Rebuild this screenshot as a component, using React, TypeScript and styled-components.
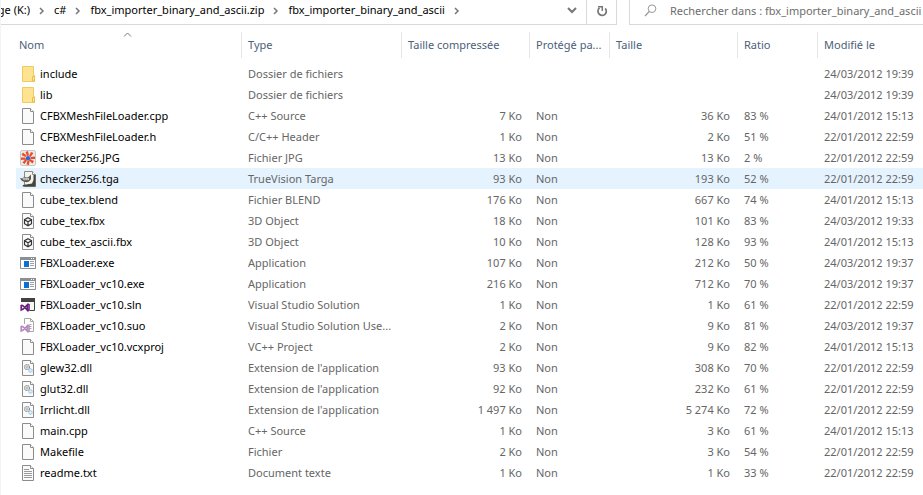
import React from 'react';
import styled, { createGlobalStyle, css } from 'styled-components';

const GlobalStyle = createGlobalStyle`
  * { box-sizing: border-box; }
  body {
    margin: 0;
    background: #fff;
    overflow: hidden;
    font-family: "Noto Sans", "Open Sans", sans-serif;
    font-size: 11px;
  }
`;

const Window = styled.main`
  min-height: 100vh;
  border-left: 1px solid #f4f4f4;
`;

const TopBar = styled.div`
  display: grid;
  grid-template-columns: minmax(0, 616px) minmax(0, 1fr);
  column-gap: 12px;
  height: 25px;
`;

const AddressBar = styled.nav`
  display: flex;
  border: 1px solid #d9d9d9;
  border-width: 0 1px 1px 0;
`;

const Crumbs = styled.ol`
  display: flex;
  flex: 1;
  align-items: center;
  min-width: 0;
  margin: 0;
  padding: 0 0 4px;
  list-style: none;
`;

const Crumb = styled.li`
  display: flex;
  align-items: center;
  justify-content: flex-end;
  white-space: nowrap;
  &:first-child { width: 53px; overflow: hidden; }
`;

const CrumbLink = styled.a`
  color: #000;
  line-height: 20px;
  text-decoration: none;
`;

const CrumbArrow = styled.svg`
  flex: none;
  width: 6px;
  height: 8px;
  margin: 1px 9px 0;
`;

const BarButton = styled.button<{ $divided?: boolean }>`
  display: flex;
  align-items: center;
  justify-content: center;
  width: 30px;
  padding: 0 0 3px;
  border: 0;
  border-left: 1px solid ${p => (p.$divided ? '#d9d9d9' : 'transparent')};
  background: none;
`;

const SearchBox = styled.label`
  display: flex;
  align-items: center;
  gap: 13px;
  padding: 0 0 4px 14px;
  border: 1px solid #d9d9d9;
  border-width: 0 0 1px 1px;
  overflow: hidden;
`;

const SearchInput = styled.input`
  flex: 1;
  min-width: 0;
  height: 20px;
  padding: 0;
  border: 0;
  outline: 0;
  background: none;
  color: #6d6d6d;
  font: inherit;
  &::placeholder { color: #6d6d6d; opacity: 1; }
`;

const FileTable = styled.table`
  width: calc(100% - 15px);
  margin: 7px 0 0 15px;
  border-spacing: 0;
  table-layout: fixed;
`;

const Column = styled.col<{ $width?: number }>`
  width: ${p => (p.$width ? `${p.$width}px` : 'auto')};
`;

const HeadCell = styled.th<{ $first?: boolean }>`
  height: 26px;
  padding: 0 4px 2px ${p => (p.$first ? 3 : 6)}px;
  border-right: 1px solid #e5e5e5;
  &:last-child { border-right: 0; }
  color: #4c607a;
  font-weight: 400;
  text-align: left;
  white-space: nowrap;
  overflow: hidden;
  text-overflow: ellipsis;
`;

const NameHead = styled.div`
  position: relative;
`;

const SortMark = styled.svg`
  position: absolute;
  top: -5px;
  left: calc(50% - 5px);
  width: 9px;
  height: 5px;
`;

const Row = styled.tr<{ $hover?: boolean }>`
  ${p => p.$hover && css`background: #e5f3ff;`}
`;

const Cell = styled.td<{ $right?: boolean }>`
  height: 21px;
  padding: 0 ${p => (p.$right ? 8 : 4)}px 0 6px;
  color: #666;
  line-height: 20px;
  text-align: ${p => (p.$right ? 'right' : 'left')};
  white-space: nowrap;
  overflow: hidden;
  text-overflow: ellipsis;
`;

const NameCell = styled(Cell)`
  padding: 0 0 0 4px;
  color: #000;
`;

const NameContent = styled.span`
  display: flex;
  align-items: center;
  gap: 4px;
`;

const TableBody = styled.tbody`
  &::before {
    content: "";
    display: table-row;
    height: 5px;
  }
`;

const Icon = styled.svg`
  flex: none;
  width: 16px;
  height: 16px;
`;

type Kind = 'folder' | 'page' | 'jpg' | 'tga' | 'cube' | 'exe' | 'sln' | 'suo' | 'dll' | 'txt';

const PageShape = () => (
  <>
    <path d="M2.5 .5h8l3 3v12h-11z" fill="#fafafa" stroke="#8c8c8c" />
    <path d="M10.5 .5v3h3" fill="#fff" stroke="#8c8c8c" />
  </>
);

const InfinityMark = ({ color }: { color: string }) => (
  <path d="M1.2 8v5l2-1 4-4v5l-4-4-2-1M7.500 7l1.500 .8v5.400L7.500 14" fill="none" stroke={color} strokeWidth="1.6" />
);

const drawings: Record<Kind, React.ReactNode> = {
  folder: (
    <>
      <path d="M2.5 .5h11v9h1v6h-12z" fill="#ffe391" stroke="#edcb62" />
      <path d="M12.5 15V10.5h2V15z" fill="#ffe9a8" stroke="#e8be45" />
    </>
  ),
  page: <PageShape />,
  jpg: (
    <>
      <rect x=".5" y=".5" width="15" height="15" rx="1.5" fill="#ececec" stroke="#c8c8c8" />
      <g fill="#ee4b22">
        <path d="M7 6L5.500 2 8 1l1 4.500zM9 6l2-4 2.500 1-3 4zM10.500 7l4.500-.5v2.500l-4.500 0zM10 9l4 2-1.500 2.500L9 10.500zM7.500 10.500L9.500 10.500 9 15l-2.500-.5zM5.500 9L7 10.500 4.500 14 2.500 12.500zM5.500 7.500v2L1 10V7.500zM6.500 5.500L5.500 7 1.500 5 3 2.500z" />
      </g>
      <circle cx="8" cy="8.200" r="2.200" fill="#2868d8" />
    </>
  ),
  tga: (
    <>
      <path d="M4.500 .5h8l3 3v12h-11z" fill="#f4f3ec" stroke="#8d8b80" />
      <path d="M12.500 .5v3h3" fill="#fff" stroke="#8d8b80" />
      <path d="M15.500 4v11.500H2.500L3 14l9-1.500L13.500 9V4z" fill="#45443d" />
      <path d="M0 7l3 .5L4 5.500l2 1 2.500-.5L11 3.500V8c-1 2.500-3 3.500-6 3C2.500 10.500 1 9.500 0 7z" fill="#5d5a52" />
      <circle cx="4.500" cy="8" r="1.200" fill="#fff" />
      <circle cx="7.500" cy="8" r="1.300" fill="#fff" />
      <circle cx="4.700" cy="8" r=".5" fill="#222" />
      <circle cx="7.500" cy="8" r=".5" fill="#222" />
    </>
  ),
  cube: (
    <>
      <PageShape />
      <path d="M8 4.700l3.500 2v4L8 12.700l-3.500-2v-4zM4.500 6.700L8 8.700l3.500-2M8 8.700v4" fill="none" stroke="#333" strokeWidth="1.200" />
    </>
  ),
  exe: (
    <>
      <path d="M.5 2.500h15v11H.5z" fill="#fff" stroke="#8a8f94" />
      <path d="M0 2h16v3H0z" fill="#8a8f94" />
      <path d="M11 3h1v1h-1zM13 3h1v1h-1z" fill="#fff" />
      <path d="M4 6h5v6H4z" fill="#0f6fd1" />
      <path d="M10 6.500h4M10 8.500h4M10 10.500h4" stroke="#a0a0a0" />
    </>
  ),
  sln: (
    <>
      <path d="M1.500 5V1.500h13v12H10" fill="#f6f6f6" stroke="#424242" />
      <path d="M1 1h14v4H1z" fill="#424242" />
      <InfinityMark color="#68217a" />
    </>
  ),
  suo: (
    <>
      <path d="M4.500 6V.5h6l3 3v10H9" fill="#fff" stroke="#a8a8a8" />
      <path d="M10.500 .5v3h3M9.500 6.500h2M9.500 8.500h2M9.500 10.500h2" fill="none" stroke="#a8a8a8" />
      <InfinityMark color="#b38bc0" />
    </>
  ),
  dll: (
    <>
      <PageShape />
      <circle cx="7" cy="7" r="2.500" fill="#e4e4e4" stroke="#8d9499" strokeWidth="1.200" strokeDasharray="1.400 .6" />
      <circle cx="7" cy="7" r=".8" fill="#8d9499" />
      <circle cx="10.500" cy="10.500" r="1.800" fill="#dceefa" stroke="#84b5d6" strokeDasharray="1.200 .5" />
    </>
  ),
  txt: (
    <>
      <PageShape />
      <path d="M4 4.500h5M4 6.500h8M4 8.500h8M4 10.500h8M4 12.500h8" stroke="#9a9a9a" />
    </>
  ),
};

type FileEntry = [Kind, string, string, string, string, string, string, string];

const d22 = '22/01/2012 22:59';
const d24 = '24/01/2012 15:13';
const m37 = '24/03/2012 19:37';
const m39 = '24/03/2012 19:39';

const files: FileEntry[] = [
  ['folder', 'include', 'Dossier de fichiers', '', '', '', '', m39],
  ['folder', 'lib', 'Dossier de fichiers', '', '', '', '', m39],
  ['page', 'CFBXMeshFileLoader.cpp', 'C++ Source', '7 Ko', 'Non', '36 Ko', '83 %', d24],
  ['page', 'CFBXMeshFileLoader.h', 'C/C++ Header', '1 Ko', 'Non', '2 Ko', '51 %', d22],
  ['jpg', 'checker256.JPG', 'Fichier JPG', '13 Ko', 'Non', '13 Ko', '2 %', d22],
  ['tga', 'checker256.tga', 'TrueVision Targa', '93 Ko', 'Non', '193 Ko', '52 %', d22],
  ['page', 'cube_tex.blend', 'Fichier BLEND', '176 Ko', 'Non', '667 Ko', '74 %', d24],
  ['cube', 'cube_tex.fbx', '3D Object', '18 Ko', 'Non', '101 Ko', '83 %', '24/03/2012 19:33'],
  ['cube', 'cube_tex_ascii.fbx', '3D Object', '10 Ko', 'Non', '128 Ko', '93 %', d24],
  ['exe', 'FBXLoader.exe', 'Application', '107 Ko', 'Non', '212 Ko', '50 %', m37],
  ['exe', 'FBXLoader_vc10.exe', 'Application', '216 Ko', 'Non', '712 Ko', '70 %', m37],
  ['sln', 'FBXLoader_vc10.sln', 'Visual Studio Solution', '1 Ko', 'Non', '1 Ko', '61 %', d22],
  ['suo', 'FBXLoader_vc10.suo', 'Visual Studio Solution Use...', '2 Ko', 'Non', '9 Ko', '81 %', m37],
  ['page', 'FBXLoader_vc10.vcxproj', 'VC++ Project', '2 Ko', 'Non', '9 Ko', '82 %', d24],
  ['dll', 'glew32.dll', "Extension de l'application", '93 Ko', 'Non', '308 Ko', '70 %', d22],
  ['dll', 'glut32.dll', "Extension de l'application", '92 Ko', 'Non', '232 Ko', '61 %', d22],
  ['dll', 'Irrlicht.dll', "Extension de l'application", '1 497 Ko', 'Non', '5 274 Ko', '72 %', d22],
  ['page', 'main.cpp', 'C++ Source', '1 Ko', 'Non', '3 Ko', '61 %', d24],
  ['page', 'Makefile', 'Fichier', '2 Ko', 'Non', '3 Ko', '54 %', d22],
  ['txt', 'readme.txt', 'Document texte', '1 Ko', 'Non', '1 Ko', '33 %', d22],
];

const crumbs = ['ge (K:)', 'c#', 'fbx_importer_binary_and_ascii.zip', 'fbx_importer_binary_and_ascii'];
const widths = [226, 160, 128, 80, 128, 80, undefined];
const headings = ['Type', 'Taille compressée', 'Protégé pa...', 'Taille', 'Ratio', 'Modifié le'];

export default function App() {
  return (
    <>
      <GlobalStyle />
      <Window>
        <TopBar>
          <AddressBar aria-label="Adresse">
            <Crumbs>
              {crumbs.map(text => (
                <Crumb key={text}>
                  <CrumbLink href="#">{text}</CrumbLink>
                  <CrumbArrow viewBox="0 0 6 8" aria-hidden="true">
                    <path d="M1 1l3 3-3 3" fill="none" stroke="#777" strokeWidth="1.500" />
                  </CrumbArrow>
                </Crumb>
              ))}
            </Crumbs>
            <BarButton aria-label="Emplacements précédents">
              <svg width="10" height="7" viewBox="0 0 10 7"><path d="M1 1l4 4 4-4" fill="none" stroke="#777" strokeWidth="2" /></svg>
            </BarButton>
            <BarButton $divided aria-label="Actualiser">
              <svg width="12" height="12" viewBox="0 0 12 12"><path d="M9.200 3.300A4.200 4.200 0 1 1 3.500 2.900" fill="none" stroke="#777" strokeWidth="1.700" /><path d="M2 1.700h4.300V6" fill="none" stroke="#777" strokeWidth="1.500" /></svg>
            </BarButton>
          </AddressBar>
          <SearchBox>
            <svg width="13" height="13" viewBox="0 0 13 13"><circle cx="8" cy="4.700" r="3.800" fill="none" stroke="#999" /><path d="M5.300 7.500L1 12" stroke="#999" strokeWidth="1.200" /></svg>
            <SearchInput aria-label="Rechercher" placeholder="Rechercher dans : fbx_importer_binary_and_ascii" />
          </SearchBox>
        </TopBar>
        <FileTable>
          <colgroup>{widths.map((w, i) => <Column key={i} $width={w} />)}</colgroup>
          <thead>
            <tr>
              <HeadCell $first aria-sort="ascending">
                <NameHead>
                  Nom
                  <SortMark viewBox="0 0 9 5" aria-hidden="true"><path d="M1 4.500l3.500-3.500L8 4.500" fill="none" stroke="#777" /></SortMark>
                </NameHead>
              </HeadCell>
              {headings.map(h => <HeadCell key={h}>{h}</HeadCell>)}
            </tr>
          </thead>
          <TableBody>
            {files.map(([kind, name, type, packed, locked, size, ratio, date]) => (
              <Row key={name} $hover={name === 'checker256.tga'}>
                <NameCell>
                  <NameContent>
                    <Icon viewBox="0 0 16 16" aria-hidden="true">{drawings[kind]}</Icon>
                    {name}
                  </NameContent>
                </NameCell>
                <Cell>{type}</Cell>
                <Cell $right>{packed}</Cell>
                <Cell>{locked}</Cell>
                <Cell $right>{size}</Cell>
                <Cell>{ratio}</Cell>
                <Cell>{date}</Cell>
              </Row>
            ))}
          </TableBody>
        </FileTable>
      </Window>
    </>
  );
}
